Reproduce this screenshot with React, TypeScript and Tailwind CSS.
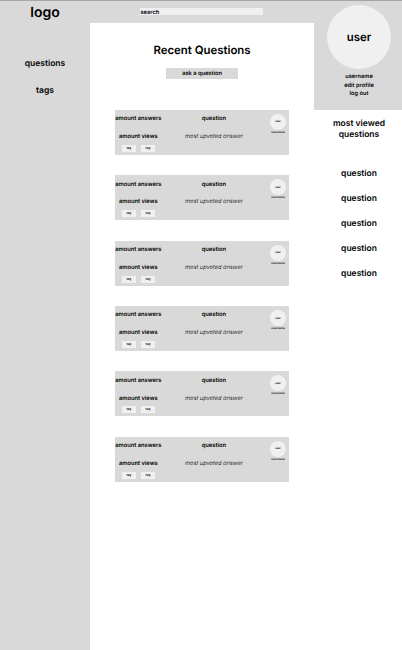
import React from "react";

const cards = [0, 1, 2, 3, 4, 5];

function Tag() {
  return (
    <span className="flex h-[7px] w-[14.5px] items-center justify-center bg-[#f0f0f0] text-[3px] leading-none">
      tag
    </span>
  );
}

function QuestionCard() {
  return (
    <article className="flex h-[45px] w-[173.5px] shrink-0 bg-[#d9d9d9] whitespace-nowrap">
      <div className="flex w-[47px] flex-col items-center pt-[4.5px] text-[5.75px] leading-[9px]">
        <span>amount answers</span>
        <span className="mt-[8.7px]">amount views</span>
        <div className="mt-[3.8px] flex gap-[4.7px] self-start pl-[6.5px]">
          <Tag />
          <Tag />
        </div>
      </div>
      <div className="flex w-[105.5px] flex-col items-center pt-[4.5px] text-[5.75px] leading-[9px]">
        <span>question</span>
        <span className="mt-[8.8px] font-light italic">most upvoted answer</span>
      </div>
      <div className="flex w-[22.5px] flex-col items-center pt-[4px] pl-[1.5px]">
        <div className="flex size-[16px] items-center justify-center rounded-full bg-[#f0f0f0] text-[2.6px] leading-none">
          user
        </div>
        <span className="mt-px text-[2.8px] leading-[3px]">username</span>
      </div>
    </article>
  );
}

export default function App() {
  return (
    <div className="flex h-[650px] w-[402px] overflow-hidden border-t border-[#a6a6a6] bg-white font-['Inter','Liberation_Sans',sans-serif] font-semibold text-black [text-rendering:geometricPrecision]">
      <aside className="flex w-[90px] shrink-0 flex-col items-center bg-[#d9d9d9]">
        <h1 className="mt-[3px] text-[14px] leading-[18px]">logo</h1>
        <a className="mt-[36px] text-[8.5px] leading-[12px]">questions</a>
        <a className="mt-[15px] text-[8.5px] leading-[12px]">tags</a>
      </aside>

      <main className="flex w-[224px] shrink-0 flex-col">
        <header className="flex h-[22px] shrink-0 bg-[#d9d9d9] pt-[7px] pl-[50px]">
          <div className="h-[7px] w-[123.4px] bg-[#f0f0f0] pl-[0.5px] text-[5.7px] leading-[9px]">search</div>
        </header>
        <h2 className="mt-[19px] text-center text-[11.4px] leading-[16px]">Recent Questions</h2>
        <button className="mt-[10.4px] ml-[76px] h-[11px] w-[72px] bg-[#d9d9d9] text-[5.7px] leading-[11px] [text-rendering:geometricPrecision]">
          ask a question
        </button>
        <section className="mt-[30.4px] ml-[25px] flex flex-col gap-[20.4px]">
          {cards.map((id) => (
            <QuestionCard key={id} />
          ))}
        </section>
      </main>

      <aside className="flex w-[88px] shrink-0 flex-col">
        <div className="flex h-[109px] shrink-0 flex-col items-center bg-[#d9d9d9] pt-[4px] pl-[2px] text-[5.7px] leading-[8px]">
          <div className="flex size-[64px] items-center justify-center rounded-full bg-[#f0f0f0] text-[11.4px]">
            user
          </div>
          <span className="mt-[4px]">username</span>
          <span className="mt-px">edit profile</span>
          <span>log out</span>
        </div>
        <h3 className="mt-[9px] pl-[2px] text-center text-[8.5px] leading-[11px]">
          most viewed
          <br />
          questions
        </h3>
        <nav className="mt-[26.6px] flex flex-col items-center gap-[13.2px] pl-[2px] text-[8.5px] leading-[12px]">
          <a>question</a>
          <a>question</a>
          <a>question</a>
          <a>question</a>
          <a>question</a>
        </nav>
      </aside>
    </div>
  );
}
